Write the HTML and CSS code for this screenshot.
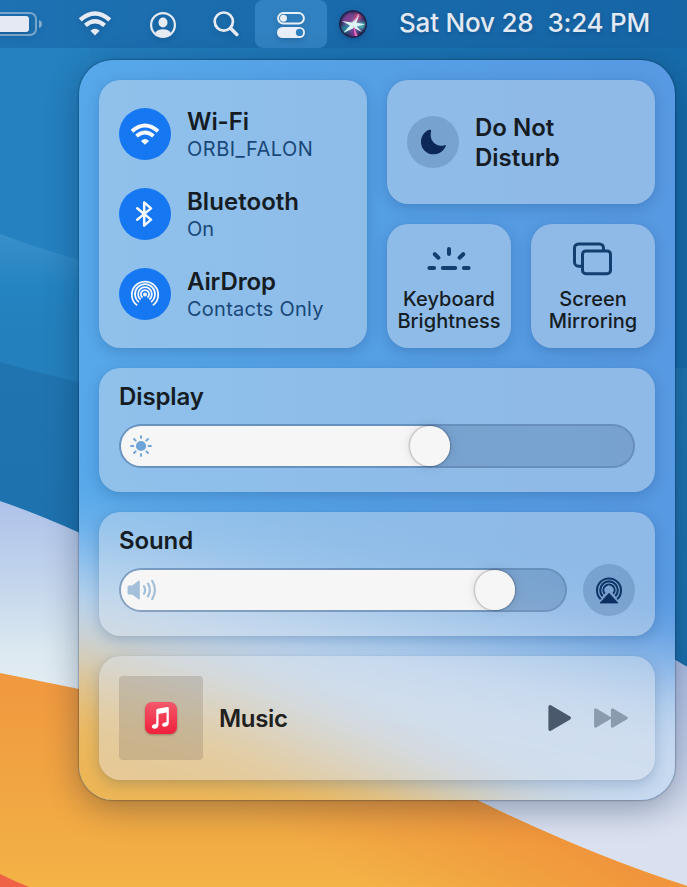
FILE: index.html
```html
<!DOCTYPE html>
<html lang="en">
<head>
<meta charset="utf-8">
<title>Control Center</title>
<link rel="stylesheet" href="styles.css">
</head>
<body>
<div class="desktop">
  <svg class="wallpaper" viewBox="0 0 687 887" preserveAspectRatio="none" aria-hidden="true">
    <defs>
      <linearGradient id="sky" x1="0" y1="0" x2="1" y2="0"><stop offset="0" stop-color="#2683c2"/><stop offset=".45" stop-color="#1d76b6"/><stop offset="1" stop-color="#166cab"/></linearGradient>
      <linearGradient id="wave" gradientUnits="userSpaceOnUse" x1="0" y1="235" x2="0" y2="330"><stop offset="0" stop-color="#388fca"/><stop offset=".55" stop-color="#2483c1"/><stop offset="1" stop-color="#2480bd"/></linearGradient>
      <linearGradient id="deep" gradientUnits="userSpaceOnUse" x1="0" y1="360" x2="0" y2="720"><stop offset="0" stop-color="#2075b1"/><stop offset="1" stop-color="#1b6fac"/></linearGradient>
      <linearGradient id="mist" gradientUnits="userSpaceOnUse" x1="0" y1="505" x2="0" y2="690"><stop offset="0" stop-color="#afc3ea"/><stop offset=".35" stop-color="#bfd2ec"/><stop offset=".8" stop-color="#dce9f0"/><stop offset="1" stop-color="#e4edf3"/></linearGradient>
      <linearGradient id="mistRight" gradientUnits="userSpaceOnUse" x1="0" y1="655" x2="0" y2="830"><stop offset="0" stop-color="#adbfe6"/><stop offset="1" stop-color="#d9e0ef"/></linearGradient>
      <linearGradient id="sand" gradientUnits="userSpaceOnUse" x1="0" y1="675" x2="0" y2="887"><stop offset="0" stop-color="#f0983f"/><stop offset=".55" stop-color="#f1a643"/><stop offset="1" stop-color="#f3b346"/></linearGradient>
      <linearGradient id="sandEdge" gradientUnits="userSpaceOnUse" x1="370" y1="890" x2="450" y2="760"><stop offset="0" stop-color="#f0953c" stop-opacity="0"/><stop offset="1" stop-color="#f0953c"/></linearGradient>
    </defs>
    <rect width="687" height="887" fill="url(#sky)"/>
    <path d="M0 48H90V450H0Z" fill="#2581c0"/>
    <path d="M0 234Q40 249 90 263V500H0Z" fill="url(#wave)"/>
    <path d="M0 362Q40 373 90 385L687 368V720H0Z" fill="url(#deep)"/>
    <path d="M0 501Q38 514 80 533L400 560 660 651 687 667V887H0Z" fill="url(#mist)"/>
    <path d="M480 560 660 651 687 667V887H400Z" fill="url(#mistRight)"/>
    <path d="M0 673 79 689 400 765 477 800Q590 855 687 886V887H0Z" fill="url(#sand)"/>
    <path d="M0 673 79 689 400 765 477 800Q590 855 687 886V887H0Z" fill="url(#sandEdge)"/>
    <path d="M0 874Q14 881 29 887H0Z" fill="#f06246"/>
  </svg>

  <header class="menubar">
    <svg class="battery" viewBox="0 0 44 28"><rect x="-18" y="3" width="54" height="22" rx="6" fill="none" stroke="#e6ebf3" stroke-opacity=".45" stroke-width="2"/><rect x="-14" y="6" width="43" height="16" rx="3" fill="#e4e9f3"/><path d="M39 10q3 1 3 4t-3 4z" fill="#e4e9f3" fill-opacity=".5"/></svg>
    <svg class="mb-wifi" viewBox="0 0 34 26"><g fill="none" stroke="#e6ebf3" stroke-width="4.4"><path d="M2.2 9.9Q17-3 31.8 9.9"/><path d="M7.4 15.4Q17 7.2 26.6 15.4"/></g><path d="M17 25.4 12.4 20.8Q17 16.8 21.6 20.8Z" fill="#e6ebf3"/></svg>
    <svg class="mb-user" viewBox="0 0 26 26"><circle cx="13" cy="13" r="11.9" fill="none" stroke="#e6ebf3" stroke-width="2.2"/><ellipse cx="13" cy="10.5" rx="4.5" ry="5" fill="#e6ebf3"/><path d="M5 21.2Q7 17.3 13 17.3T21 21.2Q17.5 24.5 13 24.5T5 21.2Z" fill="#e6ebf3"/></svg>
    <svg class="mb-search" viewBox="0 0 26 26"><circle cx="10.8" cy="10.6" r="9.1" fill="none" stroke="#e6ebf3" stroke-width="2.7"/><path d="m17.6 17.2 6.2 6.2" stroke="#e6ebf3" stroke-width="3.5" stroke-linecap="round"/></svg>
    <div class="cc-toggle"><svg viewBox="0 0 28 26"><rect x="1.1" y="1.1" width="25.8" height="10.4" rx="5.2" fill="none" stroke="#e8eff8" stroke-width="2"/><circle cx="6.5" cy="6.3" r="3.5" fill="#e8eff8"/><rect y="15" width="28" height="11" rx="5.5" fill="#e8eff8"/><circle cx="22.5" cy="20.4" r="3.6" fill="#2c7fbf"/></svg></div>
    <svg class="siri" viewBox="0 0 28 28">
      <defs><radialGradient id="orb"><stop offset="0" stop-color="#a9c4dc"/><stop offset=".4" stop-color="#6a6fa4"/><stop offset=".75" stop-color="#3c3b75"/><stop offset="1" stop-color="#1b1d3e"/></radialGradient><filter id="soft" color-interpolation-filters="sRGB"><feGaussianBlur stdDeviation="1.5"/></filter><filter id="ray" color-interpolation-filters="sRGB"><feGaussianBlur stdDeviation=".45"/></filter><clipPath id="orbClip"><circle cx="14" cy="14" r="13"/></clipPath></defs>
      <circle cx="14" cy="14" r="13.5" fill="url(#orb)"/>
      <g clip-path="url(#orbClip)"><g filter="url(#soft)"><path d="M3 12Q5 3 14 3L13 13Z" fill="#803f91"/><path d="M14 14 16 2 24 7Z" fill="#b64178"/><path d="M14 14 1 17 6 24Z" fill="#25869c"/><path d="M15 14 27 12 24 20Z" fill="#4eb8ba"/><path d="M14 14 11 27 18 26Z" fill="#7a3690"/></g>
      <g filter="url(#ray)"><path d="M3 11 13 12.4 20.5 4.5 17.4 12.8 26 14.2 17.8 16.4 23 22 15 18 4 23 11 15.6Z" fill="#dcf5f5"/><path d="M14.3 15 18.8 26 15.6 26Z" fill="#e66bb8"/><path d="M14.5 13 20.5 4.5 18.6 4Z" fill="#e27ab2"/></g></g>
      <circle cx="14" cy="14" r="13.3" fill="none" stroke="#20224b" stroke-width="1.1"/>
    </svg>
    <time class="clock"><span class="date">Sat Nov 28</span><span class="hour">3:24 PM</span></time>
  </header>

  <main class="panel">
    <svg class="glass" viewBox="0 0 596 740" preserveAspectRatio="none" aria-hidden="true">
      <defs><filter id="blur" filterUnits="userSpaceOnUse" x="-400" y="-200" width="1400" height="1440" color-interpolation-filters="sRGB"><feGaussianBlur stdDeviation="42"/></filter><linearGradient id="base"><stop offset="0" stop-color="#56a8ea"/><stop offset=".5" stop-color="#559fe5"/><stop offset="1" stop-color="#5799e2"/></linearGradient></defs>
      <rect width="596" height="740" fill="url(#base)"/>
      <g filter="url(#blur)"><path d="M-400 430 0 500 300 555 620 615 1000 680V1240H-400Z" fill="#c6d9ef"/><path d="M-400 550 0 610 140 645 340 730 480 800V1240H-400Z" fill="#ecb657"/></g>
    </svg>

    <div class="top-grid">
      <section class="card network">
        <div class="row"><span class="badge on"><svg width="30" height="24" viewBox="0 0 34 26"><g fill="none" stroke="#f6f8fb" stroke-width="4.4"><path d="M2.2 9.9Q17-3 31.8 9.9"/><path d="M7.4 15.4Q17 7.2 26.6 15.4"/></g><path d="M17 25.2 12.4 20.8Q17 16.8 21.6 20.8Z" fill="#f6f8fb"/></svg></span><div><h2 class="t-wifi">Wi-Fi</h2><p class="s-wifi">ORBI_FALON</p></div></div>
        <div class="row"><span class="badge on"><svg width="18" height="28" viewBox="0 0 18 28"><path d="M1.2 8.2 15 19.6 8.2 25.6V2.4l6.8 6L1.2 19.8" fill="none" stroke="#f6f8fb" stroke-width="2.5" stroke-linejoin="round" stroke-linecap="round"/></svg></span><div><h2 class="t-bt">Bluetooth</h2><p class="s-bt">On</p></div></div>
        <div class="row"><span class="badge on"><svg width="30" height="30" viewBox="0 0 30 30"><g fill="none" stroke="#f6f8fb" stroke-width="1.8"><path d="M7.1 26.3a13.2 13.2 0 1 1 15.8 0"/><path d="M8.9 23.1a10 10 0 1 1 12.2 0"/><path d="M10.7 20.5a6.9 6.9 0 1 1 8.6 0"/><path d="M12.6 18.5a4.1 4.1 0 1 1 4.8 0"/></g><circle cx="15" cy="15.4" r="2" fill="#f6f8fb"/></svg></span><div><h2 class="t-air">AirDrop</h2><p class="s-air">Contacts Only</p></div></div>
      </section>
      <div class="side">
        <section class="card dnd"><span class="badge off"><svg width="26" height="26" viewBox="0 0 26 26"><path d="M10.5.8Q9.9.5 9.2.8C4 2.8 1 7.5 1 13a12.3 12.3 0 0 0 12.3 12.3c5.3 0 10.1-3 12.3-7.9.4-.9-.1-1.5-1-1.2-8.5 2.4-15.8-4.1-13.5-14.2.1-.6 0-1-.6-1.2Z" fill="#0b2858"/></svg></span><h2>Do Not<br>Disturb</h2></section>
        <div class="tiles">
          <section class="card tile"><svg width="44" height="32" viewBox="0 0 44 32"><g stroke="#123e70" stroke-width="4" stroke-linecap="round"><path d="M22 3v5M7.8 8.2l3.6 3.5M36.2 8.2l-3.6 3.5M2.4 22h4.7M15.8 22h12.4M36.9 22h4.7"/></g></svg><p>Keyboard<br>Brightness</p></section>
          <section class="card tile"><svg width="44" height="36" viewBox="0 0 44 36"><path d="M12.2 25.2H7.5a4 4 0 0 1-4-4V6.9a4 4 0 0 1 4-4h21a4 4 0 0 1 4 4V9.4" fill="none" stroke="#123e70" stroke-width="3"/><rect x="11.5" y="9.9" width="28" height="22.8" rx="3.4" fill="none" stroke="#123e70" stroke-width="3"/></svg><p class="mirror">Screen<br>Mirroring</p></section>
        </div>
      </div>
    </div>

    <section class="card level">
      <h2 class="t-display">Display</h2>
      <div class="slider"><div class="fill display-fill"><svg width="22" height="22" viewBox="0 0 22 22"><circle cx="11" cy="11" r="5.1" fill="#6fa5d9"/><path d="M11 1.1v2M11 18.9v2M1.1 11h2.3M18.6 11h2.3M4 4l1.7 1.7M16.3 16.3 18 18M4 18l1.7-1.7M16.3 5.7 18 4" stroke="#6fa5d9" stroke-width="1.9" stroke-linecap="round"/></svg><span class="knob"></span></div></div>
    </section>

    <section class="card level">
      <h2 class="t-sound">Sound</h2>
      <div class="sound-row">
        <div class="slider"><div class="fill sound-fill"><svg class="speaker" width="30" height="22" viewBox="0 0 30 22"><path d="M.5 8.1Q.5 6.6 2 6.6H5.3L11 1.9q1.8-1.2 1.8.8v16.6q0 2-1.8.8L5.3 15.4H2q-1.5 0-1.5-1.5Z" fill="#a3bfda"/><g fill="none" stroke="#a3bfda" stroke-width="2.2" stroke-linecap="round"><path d="M17 7.2q2.2 3.8 0 7.6M21 4.6q3.8 6.4 0 12.8M25.2 1.8q5.4 9.2 0 18.4"/></g></svg><span class="knob"></span></div></div>
        <span class="badge off"><svg width="28" height="28" viewBox="0 0 28 28"><g fill="none" stroke="#103568" stroke-width="2.1"><path d="M5.8 23.2a12 12 0 1 1 16.4 0"/><path d="M7.7 20.3a8.8 8.8 0 1 1 12.6 0"/><path d="M9.8 17.8a5.6 5.6 0 1 1 8.4 0"/></g><path d="M14 17.2 23 27H5Z" fill="#0b2f61" stroke="#0b2f61" stroke-width=".8" stroke-linejoin="round"/></svg></span>
      </div>
    </section>

    <section class="card music">
      <div class="art"><svg width="34" height="34" viewBox="0 0 34 34"><defs><linearGradient id="red" x2="0" y2="1"><stop stop-color="#f2596c"/><stop offset="1" stop-color="#f21f3b"/></linearGradient></defs><rect x="1" y="1" width="32" height="32" rx="7" fill="url(#red)"/><path d="M12.3 9.3q0-1.2 1.2-1.5L23.3 6q1.5-.3 1.5 1v14.6c0 2.6-1.4 3.9-4 4.1-3 .2-3.8-3.2-.9-4 1.5-.4 2.7-.4 2.7-1.8V11.5l-8.1 1.5v10.4c0 2.7-1.4 4.1-4 4.3-3 .2-3.7-3.3-.8-4.1 1.5-.4 2.6-.4 2.6-1.8Z" fill="#fff"/></svg></div>
      <h2 class="t-music">Music</h2>
      <svg class="play" width="24" height="28" viewBox="0 0 24 28"><path d="M2.1 2.8 21.3 14 2.1 25.2Z" fill="#4a5a6c" stroke="#4a5a6c" stroke-width="3.4" stroke-linejoin="round"/></svg>
      <svg class="next" width="34" height="20" viewBox="0 0 34 20"><path d="M1.5 1.8 15.5 10 1.5 18.2ZM18.3 1.8 32.3 10 18.3 18.2Z" fill="#8b9bae" stroke="#8b9bae" stroke-width="2.8" stroke-linejoin="round"/></svg>
    </section>
  </main>
</div>
</body>
</html>
```

FILE: styles.css
```css
* { box-sizing: border-box; }
body { margin: 0; overflow: hidden; font-family: Inter, "Liberation Sans", sans-serif; color: #151c24; }
h2, p { margin: 0; white-space: nowrap; }
svg { display: block; flex: none; }

.desktop { position: relative; isolation: isolate; width: 687px; height: 887px; overflow: hidden; }
.wallpaper { position: absolute; inset: 0; z-index: -1; width: 687px; height: 887px; }

.menubar { display: flex; align-items: center; height: 48px; background: rgba(22, 96, 162, .5); }
.menubar > svg { overflow: visible; filter: drop-shadow(0 2px 3px rgba(0, 20, 60, .22)); }
.battery { width: 44px; height: 28px; margin-top: 0; }
.mb-wifi { width: 34px; height: 26px; margin: -2px 0 0 34px; }
.mb-user { width: 26px; height: 26px; margin: 2px 0 0 38px; }
.mb-search { width: 26px; height: 26px; margin: 0 0 0 37px; }
.cc-toggle { display: flex; align-items: center; justify-content: center; width: 72px; height: 48px; margin-left: 16px; padding-top: 2px; border-radius: 8px; background: #3182c2; }
.cc-toggle svg { width: 28px; height: 26px; filter: drop-shadow(0 2px 3px rgba(0, 20, 60, .22)); }
.siri { width: 28px; height: 28px; margin-left: 12px; }
.clock { display: flex; gap: 14px; margin: -2px 0 0 32px; color: #e2e9f3; font-size: 26px; font-weight: 500; line-height: 32px; white-space: nowrap; text-shadow: 0 2px 4px rgba(0, 20, 60, .25); }
.date { letter-spacing: -.2px; }
.hour { letter-spacing: -.25px; }

.panel { position: relative; isolation: isolate; display: flex; flex-direction: column; gap: 20px; width: 596px; height: 740px; margin: 12px 0 0 79px; padding: 20px; border-radius: 34px; box-shadow: 0 0 2px rgba(0, 20, 45, .75), 0 8px 34px rgba(0, 20, 50, .33); }
.glass { position: absolute; inset: 0; z-index: -1; width: 596px; height: 740px; border-radius: 34px; }
.card { border-radius: 21px; background: rgba(222, 228, 238, .42); box-shadow: 0 4px 14px rgba(15, 50, 100, .22), 0 0 1px rgba(15, 50, 100, .2); }
.top-grid { display: grid; grid-template-columns: 268px 268px; gap: 20px; height: 268px; }
.network { display: flex; flex-direction: column; gap: 28px; padding: 28px 20px; }
.row { display: flex; gap: 16px; height: 52px; }
h2 { font-size: 24px; font-weight: 580; line-height: 29px; letter-spacing: -.1px; }
.row h2 { margin-top: -1px; }
.row p { color: #194878; font-size: 20px; line-height: 26px; }
.row .t-bt { letter-spacing: .05px; }
.s-wifi { letter-spacing: .5px; }
.s-air { letter-spacing: .25px; }
.badge { display: flex; flex: none; align-items: center; justify-content: center; width: 52px; height: 52px; border-radius: 50%; }
.on { background: #1677f2; }
.off { background: rgba(56, 92, 138, .26); }
.side { display: grid; grid-template-rows: 124px 124px; gap: 20px; }
.dnd { display: flex; align-items: center; gap: 16px; padding: 0 20px; }
.dnd h2 { line-height: 30px; margin-top: 1px; letter-spacing: 0; }
.tiles { display: grid; grid-template-columns: 124px 124px; gap: 20px; }
.tile { display: flex; flex-direction: column; align-items: center; justify-content: space-between; height: 124px; padding: 22px 0 16px; }
.tile:last-child { padding-top: 17px; }
.tile p { text-align: center; font-size: 20px; font-weight: 460; line-height: 22px; letter-spacing: .05px; }

.level { height: 124px; padding: 14px 20px 24px; }
.level h2 { height: 42px; }
.slider { flex: 1; height: 44px; border: 2px solid rgba(45, 80, 125, .4); border-radius: 22px; background: rgba(56, 92, 138, .26) padding-box; }
.fill { display: flex; align-items: center; justify-content: space-between; height: 40px; padding-left: 9px; border-radius: 20px; background: #f6f6f6; }
.display-fill { width: 329px; }
.sound-fill { width: 394px; }
.fill .speaker { margin-left: -3px; }
.knob { width: 40px; height: 40px; border-radius: 50%; background: #f6f6f6; box-shadow: 0 0 0 1.5px rgba(0, 0, 0, .14), 0 0 12px rgba(0, 0, 0, .13); }
.sound-row { display: flex; align-items: center; gap: 16px; height: 44px; }

.music { display: flex; align-items: center; height: 124px; padding: 20px 27px 20px 20px; }
.art { display: flex; align-items: center; justify-content: center; width: 84px; height: 84px; border-radius: 4px; background: rgba(110, 95, 80, .22); }
.art svg { filter: drop-shadow(0 1px 1px rgba(80, 30, 20, .4)); }
.music h2 { margin-left: 16px; color: #20201f; letter-spacing: -.35px; }
.play { margin-left: auto; }
.next { margin-left: 22px; }
```
